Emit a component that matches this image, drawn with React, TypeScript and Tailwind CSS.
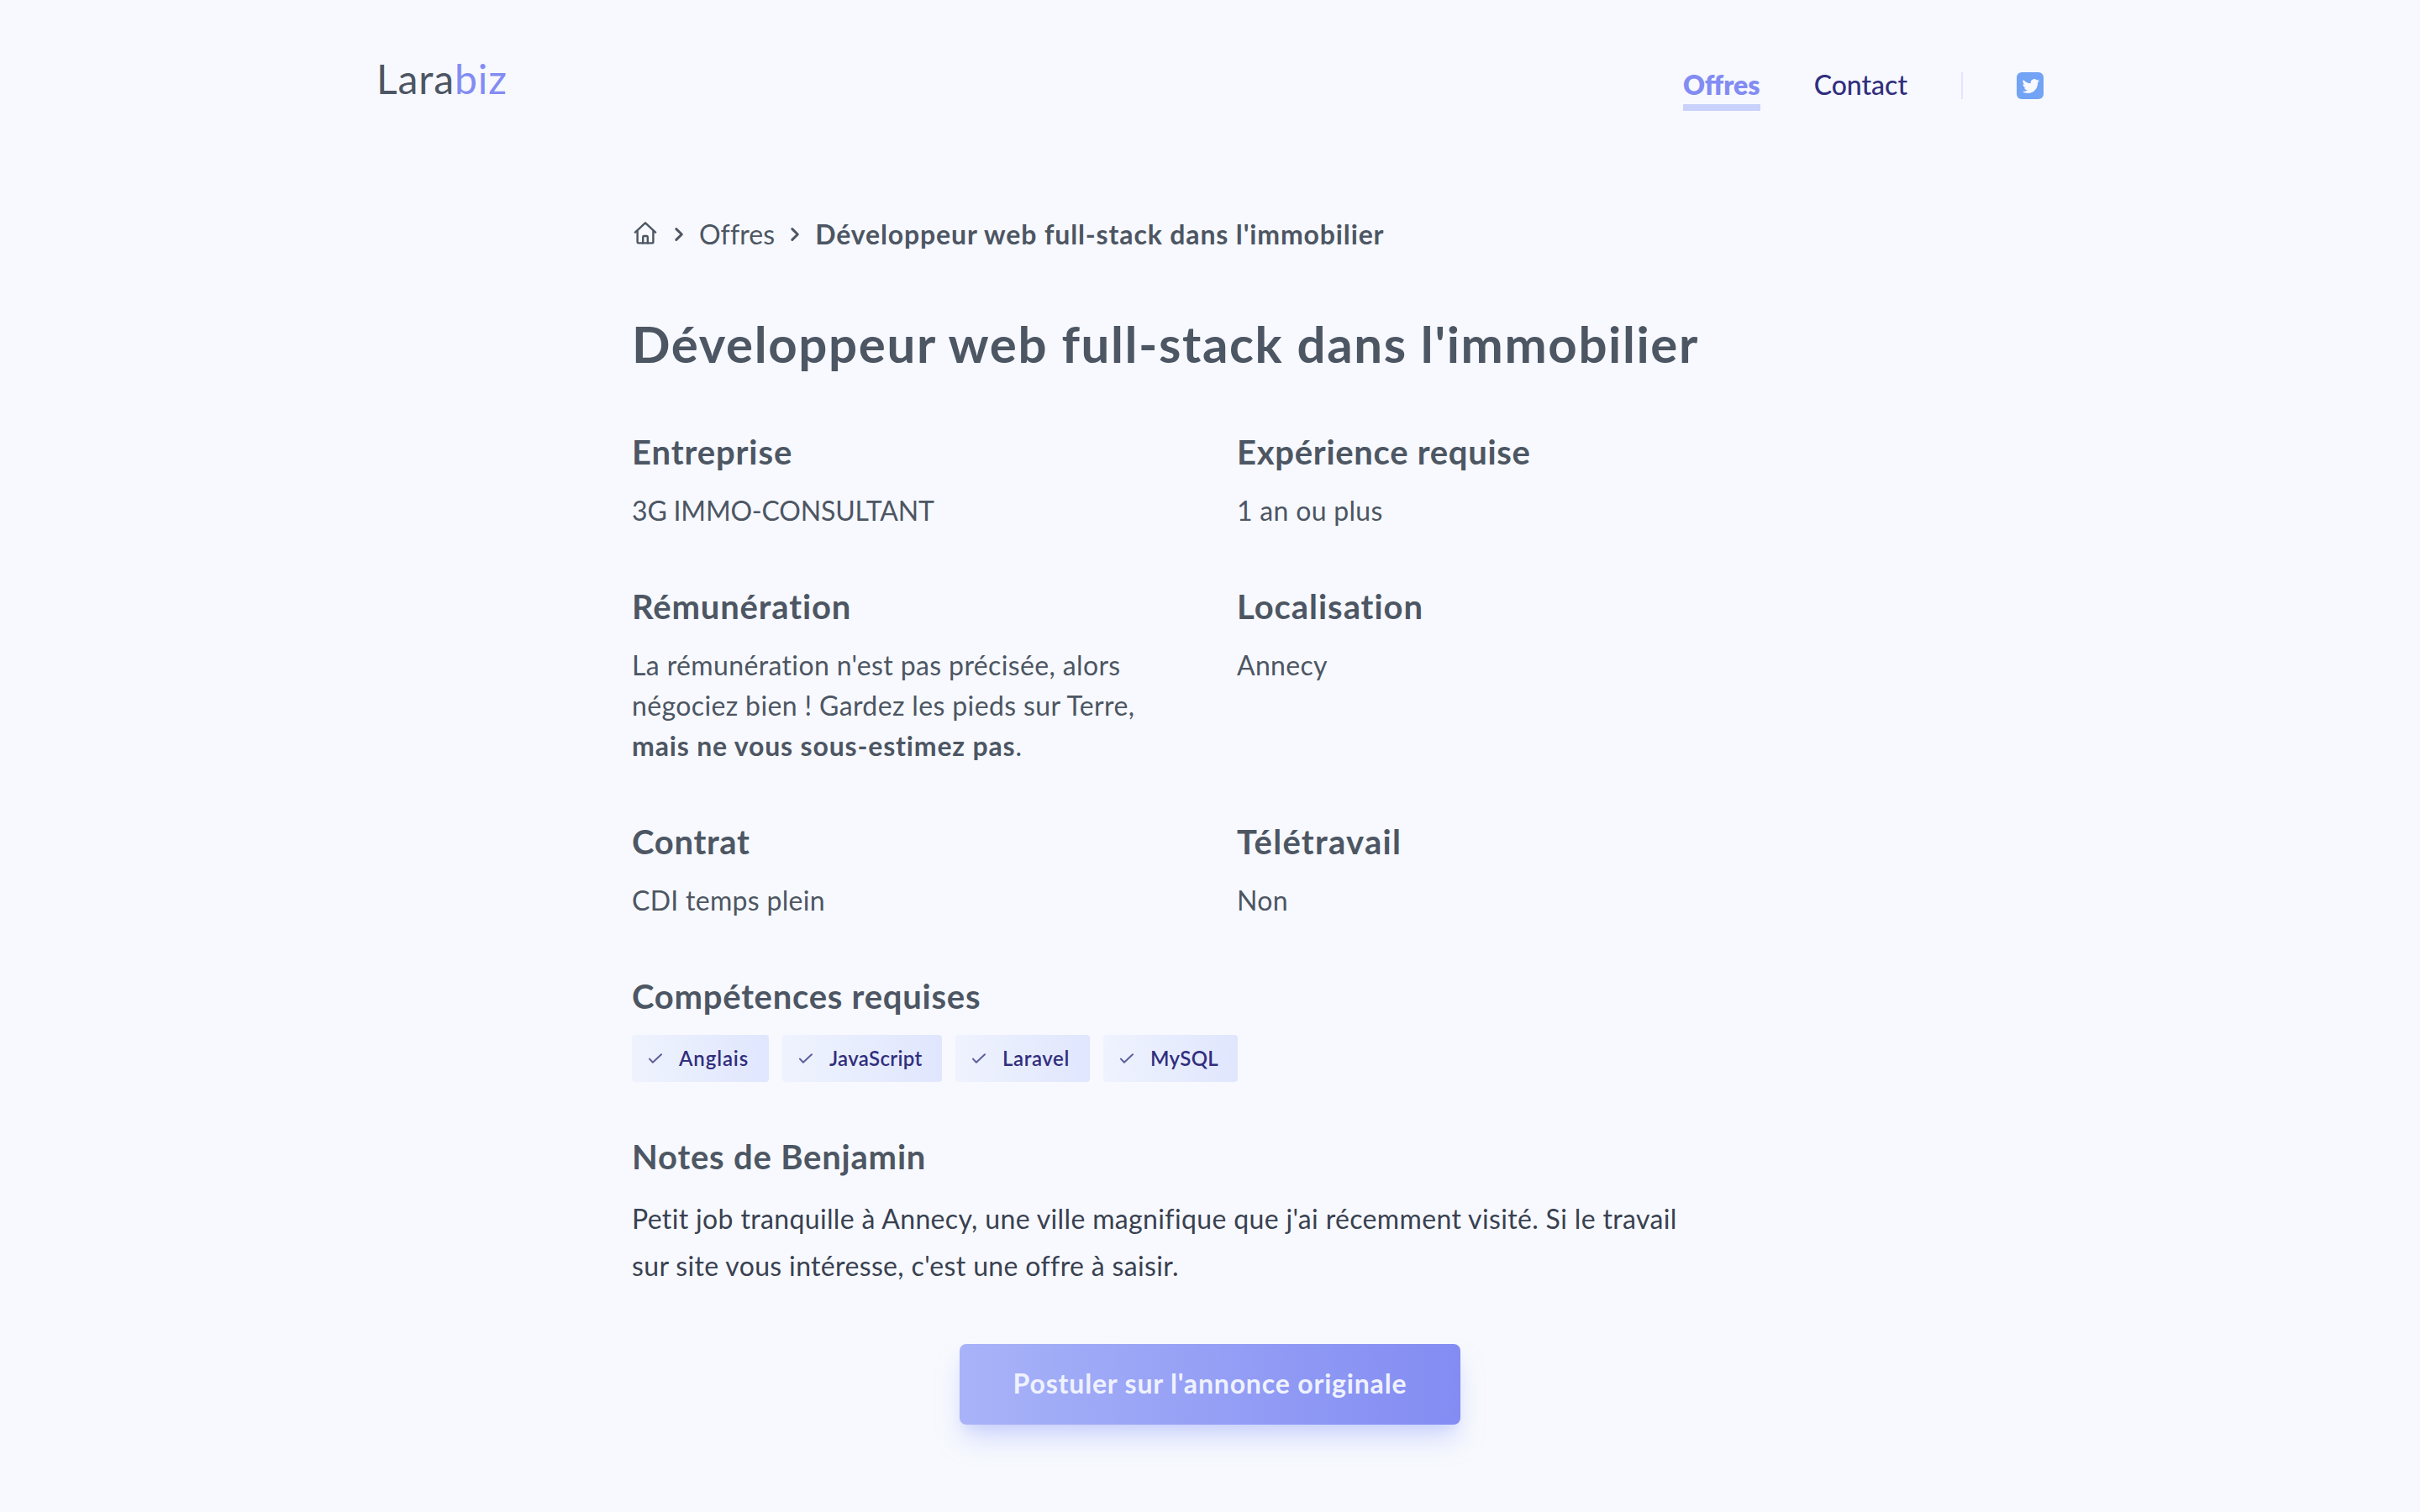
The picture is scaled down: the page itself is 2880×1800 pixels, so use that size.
import React from 'react';
import clsx from 'clsx';

const HomeIcon: React.FC = () => (
  <svg className="h-8 w-8 shrink-0" viewBox="0 0 32 32" fill="none" stroke="currentColor" strokeWidth={2.4} strokeLinecap="round" strokeLinejoin="round">
    <path d="M3.9 13.6 16 2.3l12.1 11.3" />
    <path d="M6.6 12v13.2a1.2 1.2 0 0 0 1.2 1.2h16.4a1.2 1.2 0 0 0 1.2-1.2V12" />
    <path d="M13.2 26.4v-7.2a1.2 1.2 0 0 1 1.2-1.2h3.2a1.2 1.2 0 0 1 1.2 1.2v7.2" />
  </svg>
);

const ChevronIcon: React.FC = () => (
  <svg className="h-8 w-8 shrink-0" viewBox="0 0 32 32" fill="none" stroke="currentColor" strokeWidth={3} strokeLinecap="round" strokeLinejoin="round">
    <path d="m12.8 9.6 6.5 6.4-6.5 6.4" />
  </svg>
);

const CheckIcon: React.FC = () => (
  <svg className="h-4 w-4 shrink-0 opacity-75" viewBox="0 0 16 16" fill="none" stroke="currentColor" strokeWidth={2} strokeLinecap="round" strokeLinejoin="round">
    <path d="m1 8.6 3.9 4.2L15 3.2" />
  </svg>
);

const TwitterIcon: React.FC = () => (
  <svg className="h-8 w-8 shrink-0" viewBox="0 0 32 32">
    <rect width="32" height="32" rx="6" fill="#72a3f5" />
    <path
      transform="translate(6.6 6.2) scale(.86)"
      fill="#f7f9fe"
      d="M23.953 4.57a10 10 0 0 1-2.825.775 4.958 4.958 0 0 0 2.163-2.723c-.951.555-2.005.959-3.127 1.184a4.92 4.92 0 0 0-8.384 4.482C7.69 8.095 4.067 6.13 1.64 3.162a4.822 4.822 0 0 0-.666 2.475c0 1.71.87 3.213 2.188 4.096a4.904 4.904 0 0 1-2.228-.616v.06a4.923 4.923 0 0 0 3.946 4.827 4.996 4.996 0 0 1-2.212.085 4.936 4.936 0 0 0 4.604 3.417 9.867 9.867 0 0 1-6.102 2.105c-.39 0-.779-.023-1.17-.067a13.995 13.995 0 0 0 7.557 2.209c9.053 0 13.998-7.496 13.998-13.985 0-.21 0-.42-.015-.63A9.935 9.935 0 0 0 24 4.59z"
    />
  </svg>
);

const SectionTitle: React.FC<{ className?: string; children: React.ReactNode }> = ({ className, children }) => (
  <h2 className={clsx('text-[40px] leading-[60px] font-bold', className ?? 'tracking-[0.7px]')}>{children}</h2>
);

const Detail: React.FC<{ title: string; titleClass?: string; className?: string; children: React.ReactNode }> = ({
  title,
  titleClass,
  className,
  children,
}) => (
  <div>
    <SectionTitle className={titleClass}>{title}</SectionTitle>
    <div className={clsx('mt-4', className ?? 'tracking-[0.3px]')}>{children}</div>
  </div>
);

const SKILLS = [
  { name: 'Anglais', className: 'w-[163px] tracking-[0.9px]' },
  { name: 'JavaScript', className: 'w-[190px] tracking-[0.35px]' },
  { name: 'Laravel', className: 'w-[160px] tracking-[0.6px]' },
  { name: 'MySQL', className: 'w-[160px] tracking-[0.3px]' },
];

export default function App() {
  return (
    <div className="min-h-[1800px] bg-[#f7f9fe] font-['Lato',sans-serif] text-[32px] leading-[48px] text-[#4d5663]">
      <header className="mx-auto flex h-[132px] w-[1984px] items-start justify-between pt-[62px]">
        <a href="#" className="text-[48px] leading-[64px] tracking-[0.9px]">
          Lara<span className="text-[#838cf3]">biz</span>
        </a>
        <nav className="mt-[15px] flex items-start gap-16">
          <a href="#" className="h-[55px] border-b-8 border-[#c8d2fb] font-extrabold text-[#838cf3]">Offres</a>
          <a href="#" className="font-medium text-[#312e7d]">Contact</a>
          <span className="mt-[9px] h-8 w-0.5 bg-[#e0e6fd]" />
          <a href="#" aria-label="Twitter" className="mt-[9px]">
            <TwitterIcon />
          </a>
        </nav>
      </header>

      <main className="mx-auto w-[1376px] pt-[123px]">
        <nav className="flex items-center gap-2">
          <HomeIcon />
          <ChevronIcon />
          <a href="#" className="tracking-[0.1px]">Offres</a>
          <ChevronIcon />
          <span className="font-bold tracking-[0.86px]">Développeur web full-stack dans l'immobilier</span>
        </nav>

        <h1 className="mt-[70px] text-[60px] leading-[72px] font-bold tracking-[1.62px] whitespace-nowrap">
          Développeur web full-stack dans l'immobilier
        </h1>

        <div className="mt-[63px] grid grid-cols-2 gap-x-16 gap-y-[60px]">
          <Detail title="Entreprise" titleClass="tracking-[0.9px]" className="tracking-[-0.18px]">3G IMMO-CONSULTANT</Detail>
          <Detail title="Expérience requise">1 an ou plus</Detail>
          <Detail title="Rémunération" titleClass="tracking-[0.85px]" className="tracking-[0.37px]">
            La rémunération n'est pas précisée, alors
            <br />
            négociez bien ! Gardez les pieds sur Terre,
            <br />
            <strong className="font-bold tracking-[0.83px]">mais ne vous sous-estimez pas</strong>.
          </Detail>
          <Detail title="Localisation" titleClass="tracking-[0.95px]">Annecy</Detail>
          <Detail title="Contrat">CDI temps plein</Detail>
          <Detail title="Télétravail" titleClass="tracking-[1.3px]">Non</Detail>
        </div>

        <SectionTitle className="mt-[60px] tracking-[0.75px]">Compétences requises</SectionTitle>
        <ul className="mt-4 flex gap-4">
          {SKILLS.map((skill) => (
            <li
              key={skill.name}
              className={clsx(
                'flex h-14 items-center gap-5 rounded bg-gradient-to-r from-[#eff3fe] to-[#e0e6fd] pl-5 text-[24px] font-semibold text-[#312e7d]',
                skill.className,
              )}
            >
              <CheckIcon />
              {skill.name}
            </li>
          ))}
        </ul>

        <SectionTitle className="mt-[59px] tracking-[0.8px]">Notes de Benjamin</SectionTitle>
        <p className="mt-4 leading-[56px] tracking-[0.35px] whitespace-nowrap text-[#394150]">
          Petit job tranquille à Annecy, une ville magnifique que j'ai récemment visité. Si le travail
          <br />
          sur site vous intéresse, c'est une offre à saisir.
        </p>

        <div className="mt-[65px] flex justify-center">
          <a
            href="#"
            className="flex h-24 w-[596px] items-center justify-center rounded-lg bg-gradient-to-r from-[#a8b3f8] to-[#838cf2] pb-0.5 font-bold tracking-[0.82px] text-[#eff2fe] shadow-[0_20px_30px_-6px_#a5b4fc80,0_8px_12px_-4px_#a5b4fc33]"
          >
            Postuler sur l'annonce originale
          </a>
        </div>
      </main>
    </div>
  );
}
